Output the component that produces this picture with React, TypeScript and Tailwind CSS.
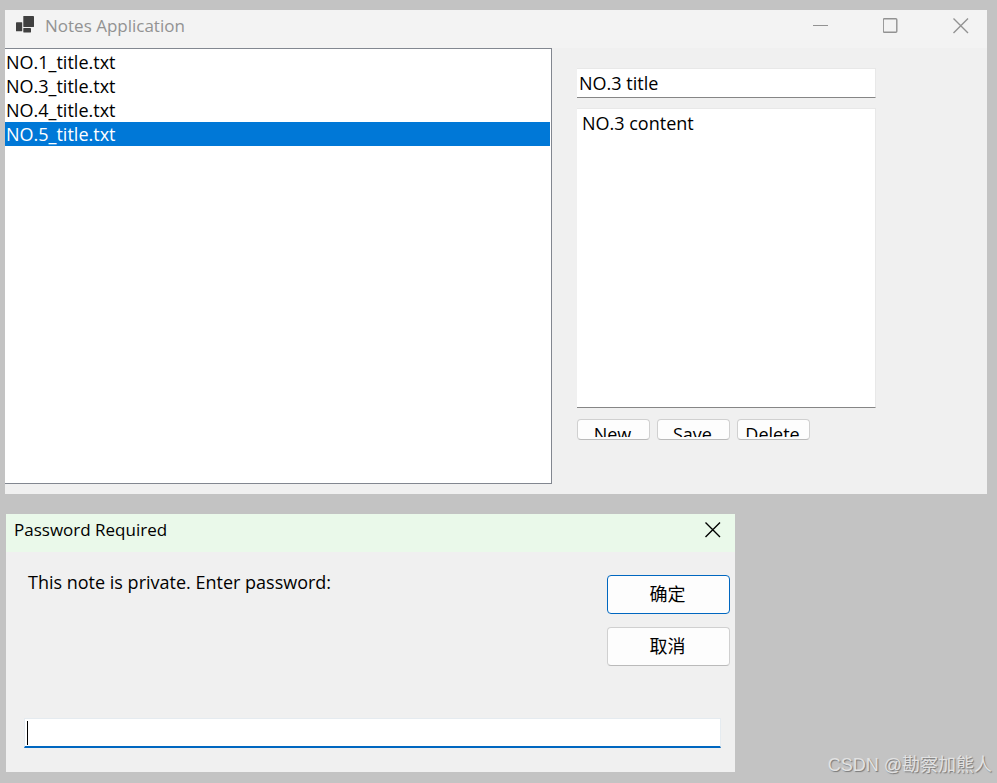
import { useState } from "react";

const notes = ["NO.1_title.txt", "NO.3_title.txt", "NO.4_title.txt", "NO.5_title.txt"];
const actions = ["New", "Save", "Delete"];

function CloseIcon() {
  return (
    <svg width="16" height="16" viewBox="0 0 16 16" fill="none" stroke="currentColor" strokeWidth="1.4" aria-hidden="true">
      <path d="M0.5 0.5L15 15M15 0.5L0.5 15" />
    </svg>
  );
}

function AppIcon() {
  return (
    <svg width="20" height="18" viewBox="0 0 20 18" fill="#404040" aria-hidden="true">
      <rect x="8.3" y="0" width="10.7" height="11" rx="0.4" />
      <rect x="1" y="6.3" width="6.2" height="9" rx="0.4" />
      <rect x="8.3" y="12" width="7.7" height="4.4" rx="0.4" />
    </svg>
  );
}

function NotesWindow() {
  const [selected, setSelected] = useState(3);
  return (
    <section className="mr-[10px] ml-[5px] bg-[#f0f0f0]">
      <header className="flex h-[38px] items-start justify-between bg-[#f3f3f3] pr-[18px] pl-[10px] text-[#929292]">
        <div className="flex items-start">
          <div className="pt-[6px]">
            <AppIcon />
          </div>
          <h1 className="pt-1 pl-[10px] text-[17px] leading-6">Notes Application</h1>
        </div>
        <div className="flex gap-[54px] pt-2">
          <button type="button" aria-label="Minimize">
            <svg width="16" height="16" viewBox="0 0 16 16" stroke="currentColor" aria-hidden="true">
              <path d="M0 7.5H15" />
            </svg>
          </button>
          <button type="button" aria-label="Maximize">
            <svg width="16" height="16" viewBox="0 0 16 16" fill="none" stroke="currentColor" strokeWidth="1.4" aria-hidden="true">
              <rect x="0.2" y="0.7" width="13.6" height="13.6" rx="1" />
            </svg>
          </button>
          <button type="button" aria-label="Close">
            <CloseIcon />
          </button>
        </div>
      </header>
      <div className="flex gap-[25px] pb-[10px]">
        <ul className="min-h-[436px] flex-1 border-y border-r border-[#828790] bg-white pt-px pr-px">
          {notes.map((note, i) => (
            <li key={note}>
              <button
                type="button"
                onClick={() => setSelected(i)}
                className={
                  i === selected
                    ? "block h-6 w-full bg-[#0078d7] pl-px text-left text-[18px] leading-6 text-white"
                    : "block h-6 w-full pl-px text-left text-[18px] leading-6"
                }
              >
                {note}
              </button>
            </li>
          ))}
        </ul>
        <form className="mr-[111px] w-[299px] pt-5">
          <input
            aria-label="Title"
            defaultValue="NO.3 title"
            className="block h-[30px] w-full border-t border-r border-b border-[#e8e8e8] border-b-[#868686] bg-white px-[2px] text-[18px] leading-6 outline-none"
          />
          <textarea
            aria-label="Content"
            defaultValue="NO.3 content"
            className="mt-[10px] block h-[300px] w-full resize-none border-t border-r border-b border-[#e8e8e8] border-b-[#868686] bg-white px-[5px] pt-[2px] text-[18px] leading-6 outline-none"
          />
          <div className="mt-[11px] flex gap-[7px]">
            {actions.map((action) => (
              <button
                key={action}
                type="button"
                className="h-[21px] w-[73px] rounded-[4px] border border-[#d0d0d0] border-b-[#bababa] bg-[#fdfdfd] pr-[2px] pb-[2px]"
              >
                <span className="block h-[17px] overflow-hidden pt-[2px] text-[18px] leading-6">{action}</span>
              </button>
            ))}
          </div>
        </form>
      </div>
    </section>
  );
}

function PasswordDialog() {
  return (
    <section role="dialog" aria-labelledby="dialog-title" className="mt-5 ml-[6px] w-[729px] max-w-full bg-[#f0f0f0]">
      <header className="flex h-[38px] items-start justify-between bg-[#eaf9ea] pr-[14px] pl-2">
        <h2 id="dialog-title" className="pt-1 text-[17px] leading-6">Password Required</h2>
        <button type="button" aria-label="Close dialog" className="pt-2">
          <CloseIcon />
        </button>
      </header>
      <form className="pb-6">
        <div className="flex items-start justify-between pt-[23px] pr-[5px] pl-[22px]">
          <label htmlFor="password" className="-mt-[5px] text-[18px] leading-6">
            This note is private. Enter password:
          </label>
          <div className="flex w-[123px] flex-col gap-[13px] font-['Noto_Sans_CJK_SC',sans-serif] text-[18px] leading-6">
            <button type="button" className="h-[39px] rounded-[4px] border border-[#0067c0] bg-[#fdfdfd] pr-[2px] pb-[3px]">
              确定
            </button>
            <button type="button" className="h-[39px] rounded-[4px] border border-[#d0d0d0] border-b-[#bababa] bg-[#fdfdfd] pr-[2px] pb-[3px]">
              取消
            </button>
          </div>
        </div>
        <div className="relative mt-[52px] mr-[14px] ml-[18px]">
          <input
            id="password"
            type="password"
            className="block h-[30px] w-full border border-b-2 border-[#e5ebf0] border-b-[#0067c0] bg-white px-[3px] text-[18px] outline-none"
          />
          <span className="absolute top-[3px] left-[3px] h-6 w-px bg-black" />
        </div>
      </form>
    </section>
  );
}

export default function App() {
  return (
    <main className="relative flex min-h-screen flex-col bg-[#c3c3c3] pt-[10px] font-['Open_Sans','Noto_Sans_CJK_SC',sans-serif] text-black">
      <NotesWindow />
      <PasswordDialog />
      <p className="absolute right-[5px] bottom-[4px] font-['Liberation_Sans','Noto_Sans_CJK_SC',sans-serif] text-[18px] leading-7 text-[#e2e2e2] [text-shadow:1px_1px_1px_#777]">
        CSDN @勘察加熊人
      </p>
    </main>
  );
}
